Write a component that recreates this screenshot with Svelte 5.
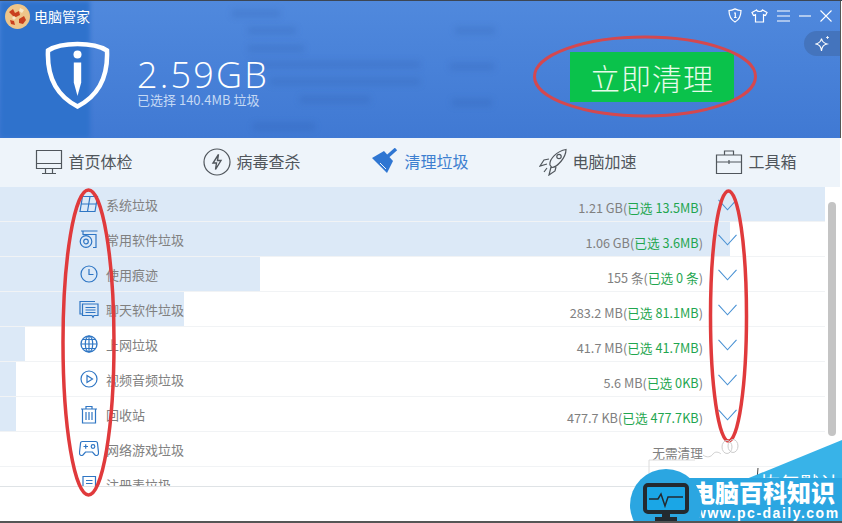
<script>
  const tabs = [
    { name: "首页体检", icon: "monitor" },
    { name: "病毒查杀", icon: "bolt" },
    { name: "清理垃圾", icon: "broom", active: true },
    { name: "电脑加速", icon: "rocket" },
    { name: "工具箱", icon: "box" }
  ];

  // bar = width of the pale blue progress behind each row
  const rows = [
    { name: "系统垃圾", icon: "win", total: "1.21 GB", sel: "已选 13.5MB", bar: 825 },
    { name: "常用软件垃圾", icon: "disc", total: "1.06 GB", sel: "已选 3.6MB", bar: 730 },
    { name: "使用痕迹", icon: "clock", total: "155 条", sel: "已选 0 条", bar: 260 },
    { name: "聊天软件垃圾", icon: "chat", total: "283.2 MB", sel: "已选 81.1MB", bar: 184 },
    { name: "上网垃圾", icon: "globe", total: "41.7 MB", sel: "已选 41.7MB", bar: 25 },
    { name: "视频音频垃圾", icon: "play", total: "5.6 MB", sel: "已选 0KB", bar: 16 },
    { name: "回收站", icon: "trash", total: "477.7 KB", sel: "已选 477.7KB", bar: 16 },
    { name: "网络游戏垃圾", icon: "game", plain: "无需清理", bar: 0 },
    { name: "注册表垃圾", icon: "reg", bar: 0 }
  ];

  // blurred text of the window behind the translucent header
  const smudges = [
    [232, 9, 48], [248, 26, 48], [248, 44, 56], [250, 60, 170], [270, 77, 150],
    [300, 95, 70], [253, 122, 62], [455, 26, 40], [450, 62, 44], [452, 98, 40]
  ];
</script>

<div class="win">
  <header class="top">
    <div class="backdrop" aria-hidden="true"></div>
    {#each smudges as s}
      <div class="smudge" style="left: {s[0]}px; top: {s[1]}px; width: {s[2]}px"></div>
    {/each}
    <div class="title">
      <svg class="avatar" width="25" height="25" viewBox="0 0 25 25">
        <circle cx="12.500" cy="12.500" r="12.500" fill="#eec58a" />
        <path d="M4 8l4-3 2 4 4-2 1 4-4 2-3-1zM14 15l5-3 2 4-3 4-4-1zM5 16l4 1 1 4-4-1z" fill="#c9401f" />
        <path d="M15 4l4 2-2 3-3-2zM9 12l2 2-2 2-2-2z" fill="#f7e9c9" />
      </svg>
      <span>电脑管家</span>
    </div>

    <div class="win-btns">
      <svg width="14" height="15" viewBox="0 0 14 15" fill="none" stroke="#fff" stroke-width="1.200">
        <path d="M1 2.500c2 0 4-.6 6-1.600 2 1 4 1.600 6 1.600 0 5-1.500 9-6 11.500C2.500 11.500 1 7.500 1 2.500z" />
        <path d="M6 5h1.300v4.500M6 9.500h2.600" />
      </svg>
      <svg width="17" height="14" viewBox="0 0 17 14" fill="none" stroke="#fff" stroke-width="1.200">
        <path d="M5.500 1L1 3.500l1.500 3 2-.8V13h8V5.700l2 .8 1.500-3L11.500 1c-.5 2-5.500 2-6 0z" />
      </svg>
      <svg width="13" height="12" viewBox="0 0 13 12" stroke="#fff" stroke-width="1.100">
        <path d="M0 1h13M0 6h13M0 11h13" />
      </svg>
      <svg width="12" height="12" viewBox="0 0 12 12" stroke="#fff" stroke-width="1.100">
        <path d="M0 6h12" />
      </svg>
      <svg width="12" height="12" viewBox="0 0 12 12" stroke="#fff" stroke-width="1.100">
        <path d="M.5.500l11 11M11.500.500l-11 11" />
      </svg>
    </div>

    <div class="spark">
      <svg width="15" height="18" viewBox="0 0 15 18" fill="none" stroke="#fff" stroke-width="1.100">
        <path d="M6.500 3.500c.6 3 1.800 4.500 5.500 5.500-3.700 1-4.900 2.500-5.500 7-.6-4.500-1.800-6-5.500-7 3.700-1 4.900-2.500 5.500-5.500z" />
        <path d="M12.500 1v3M11 2.500h3" stroke-width=".8" />
      </svg>
    </div>

    <div class="summary">
      <svg class="shield" width="65" height="69" viewBox="0 0 65 69">
        <path d="M32.500 3C22 3 10 5 3 9.500c-1 22 6 44 29.500 56C56 53.500 63 31.500 62 9.500 55 5 43 3 32.500 3z" fill="none" stroke="#fff" stroke-width="4.500" />
        <circle cx="32.500" cy="13.500" r="4" fill="#fff" />
        <path d="M28.800 21.500h7.400v20L32.500 55 28.800 41.500z" fill="#fff" />
      </svg>
      <div class="size">
        <div class="gb">2.59GB</div>
        <div class="picked">已选择 140.4MB 垃圾</div>
      </div>
      <button class="clean">立即清理</button>
    </div>
  </header>

  <nav class="tabs">
    {#each tabs as t}
      <div class="tab" class:active={t.active}>
        <svg class="tab-ico" width="28" height="28" viewBox="0 0 28 28" fill="none" stroke="currentColor" stroke-width="1.200">
          {#if t.icon === "monitor"}
            <path d="M1.500 2.500h25v18h-25zM1.500 15.500h25M10.500 20.500v5M17.500 20.500v5M7 25.500h14" />
          {:else if t.icon === "bolt"}
            <circle cx="14" cy="14" r="13" />
            <path d="M15.500 6.500L10 15h3.500l-1 6.500L18 12.500h-3.500z" stroke-width="1.400" />
          {:else if t.icon === "broom"}
            <path d="M1 10L13 3l9 10-6 12z" fill="#2f76d2" stroke="none" />
            <path d="M16 9l9-8" stroke="#2f76d2" stroke-width="3.500" />
            <path d="M9 15l6 6" stroke="#eef4fa" stroke-width="1" />
          {:else if t.icon === "rocket"}
            <path d="M11 17C10 11 18 3 27 1.500 27 10 18 19 13 19.500zM10 11l-5 1-4 6 7-2M17 19l-1 4-6 4 2-8M8 20l-3 4" />
            <circle cx="20" cy="8.500" r="2.200" />
          {:else}
            <path d="M1.500 7h25v18.500h-25zM1.500 14h25M9.500 7V3h9v4M14 12v4" />
          {/if}
        </svg>
        <span>{t.name}</span>
      </div>
    {/each}
  </nav>

  <main class="list">
    {#each rows as r}
      <div class="row">
        <div class="bar" style="width: {r.bar}px"></div>
        <svg class="row-ico" width="20" height="20" viewBox="0 0 20 20" fill="none" stroke="#2f76c4" stroke-width="1.200">
          {#if r.icon === "win"}
            <path d="M3.500 2.500h15L16 17.500H1zM2.300 10h15M11 2.500L8.500 17.500" />
          {:else if r.icon === "disc"}
            <path d="M2 2h16.500M4 2v3.500h13v13h-3" />
            <circle cx="7" cy="12.500" r="5.800" />
            <circle cx="7" cy="12.500" r="2.300" />
          {:else if r.icon === "clock"}
            <circle cx="10" cy="10" r="8" />
            <path d="M10 5v5.500h4.500" />
          {:else if r.icon === "chat"}
            <path d="M1 5V2.500h15M1 5v10h2M3.500 5h15.500v11.500h-4l-1 1.800-1-1.800H3.500zM6.500 8.500h10M6.500 11h10M6.500 13.500h10" />
          {:else if r.icon === "globe"}
            <circle cx="10" cy="10" r="8" stroke-width="1.300" />
            <ellipse cx="10" cy="10" rx="3.700" ry="8" />
            <path d="M2 10h16M3.300 5.500h13.400M3.300 14.500h13.400M10 2v16" />
          {:else if r.icon === "play"}
            <circle cx="10" cy="10" r="8" />
            <path d="M8 6.500l5.500 3.500L8 13.500z" />
          {:else if r.icon === "trash"}
            <path d="M3.500 5h13v14h-13zM2 5h16M7 5V2.500h6V5M7 8v8M10 8v8M13 8v8" />
          {:else if r.icon === "game"}
            <path d="M3.500 2.500h13c1.500 0 2 1 2 2l1 9c.2 3-2 3.500-3.500 2.500l-2.500-3h-7L4 16c-1.500 1-3.700.5-3.500-2.500l1-9c0-1 .5-2 2-2z" />
            <path d="M4.500 7.500h4.500M6.700 5.300v4.500" />
            <circle cx="14" cy="7.500" r="1.800" />
          {:else}
            <path d="M4 2.500h12.500v15H4zM7 6.500h6.500M7 9.500h6.500M7 12.500h6.500" />
          {/if}
        </svg>
        <span class="row-name">{r.name}</span>
        <span class="row-info">
          {#if r.plain}
            {r.plain}
          {:else if r.total}
            {r.total}(<em>{r.sel}</em>)
          {/if}
        </span>
        <span class="chev">
          {#if r.total}
            <svg width="19" height="12" viewBox="0 0 19 12" fill="none" stroke="#4a92d4" stroke-width="1.100">
              <path d="M.5.800l9 10 9-10" />
            </svg>
          {/if}
        </span>
      </div>
    {/each}
  </main>

  <div class="scroll"><div class="thumb"></div></div>
  <div class="foot"></div>

  <svg class="marks" width="842" height="523" viewBox="0 0 842 523" fill="none" stroke="#e03a3c" aria-hidden="true">
    <ellipse cx="645" cy="76.500" rx="110.500" ry="39.500" stroke="#d4484f" stroke-width="3" />
    <ellipse cx="88.500" cy="342.500" rx="25.500" ry="152.500" stroke-width="3.500" />
    <ellipse cx="728.500" cy="316" rx="18" ry="125" stroke-width="3.500" />
    <ellipse cx="727" cy="447" rx="5" ry="6.500" stroke="#ccc" stroke-width="1" />
    <ellipse cx="733" cy="446" rx="5" ry="6.500" stroke="#ccc" stroke-width="1" />
    <path d="M703 455c4 3 8 2 10-1 2-3 6-2 8 0" stroke="#d2d2d2" stroke-width="1" />
    <path d="M649 478v-18h46" stroke="#dcdcdc" stroke-width="1" />
    <path d="M758 468l-1 12" stroke="#444" stroke-width="1" />
  </svg>

  <div class="mark-wrap">
    <div class="wedge"></div>
    <div class="wm-cut"><span>恢复默认</span></div>
    <div class="wm-band"></div>
    <div class="wm-text">
      <b>电脑百科知识</b>
      <i>www.pc-daily.com</i>
    </div>
    <div class="wm-circle">
      <svg width="46" height="40" viewBox="0 0 46 40">
        <rect x="2" y="2" width="42" height="27" rx="3" fill="#1aa6e6" stroke="#232a30" stroke-width="4" />
        <path d="M6 16h9l3-5 4 12 3-9h15" fill="none" stroke="#232a30" stroke-width="1.500" />
        <path d="M19 30h8v4h7v5H12v-5h7z" fill="#232a30" />
      </svg>
    </div>
  </div>
</div>

<style>
  :global(body) {
    margin: 0;
    background: #fff;
  }

  .win {
    position: relative;
    width: 842px;
    height: 523px;
    overflow: hidden;
    background: #fff;
    font-family: "Noto Sans CJK SC", "Liberation Sans", sans-serif;
    box-sizing: border-box;
    border-top: 1px solid #3c4654;
    border-bottom: 2px solid #555;
  }

  .top {
    position: relative;
    height: 137px;
    margin-right: 1px;
    background: linear-gradient(180deg, #5089dd 0%, #4079d3 100%);
    color: #fff;
    overflow: hidden;
    border-right: 1px solid #555;
  }

  .backdrop {
    position: absolute;
    left: 0;
    top: 0;
    bottom: 0;
    width: 90px;
    background: #2f72cc;
    filter: blur(2px);
  }

  .smudge {
    position: absolute;
    height: 7px;
    background: rgba(40, 85, 165, 0.2);
    filter: blur(3px);
  }

  .title {
    position: relative;
    display: flex;
    align-items: center;
    gap: 4px;
    padding: 3px 0 0 5px;
    font-size: 14px;
    line-height: 25px;
  }

  .avatar {
    display: block;
  }

  .win-btns {
    position: absolute;
    top: 7px;
    right: 8px;
    display: flex;
    align-items: center;
    gap: 9px;
  }

  .spark {
    position: absolute;
    top: 30px;
    right: 0;
    width: 36px;
    height: 25px;
    border-radius: 13px 0 0 13px;
    background: #4474bd;
    display: flex;
    align-items: center;
    justify-content: center;
  }

  .summary {
    position: relative;
    display: flex;
    align-items: flex-start;
    padding: 12px 0 0 45px;
  }

  .shield {
    display: block;
    flex: none;
  }

  .size {
    margin-left: 27px;
    padding-top: 17px;
  }

  .gb {
    font-family: "Open Sans", "Liberation Sans", sans-serif;
    font-weight: 300;
    font-size: 36px;
    line-height: 34px;
    letter-spacing: 2.200px;
  }

  .picked {
    font-size: 13px;
    line-height: 16px;
    color: #c5d9f4;
  }

  .clean {
    position: absolute;
    left: 570px;
    top: 23px;
    width: 164px;
    height: 50px;
    border: 0;
    padding: 0;
    background: #0ac24b;
    color: #e6fbe9;
    font-family: inherit;
    font-size: 30px;
    font-weight: 300;
    letter-spacing: 1px;
  }

  .tabs {
    display: flex;
    height: 49px;
    margin-right: 2px;
    background: #eef4fa;
    align-items: center;
    color: #50565c;
    font-size: 16px;
  }

  .tab {
    flex: 1;
    display: flex;
    align-items: center;
    justify-content: center;
    gap: 5px;
    white-space: nowrap;
  }

  .tab span {
    margin-top: -4px;
  }

  .tab.active {
    color: #3d7fd0;
  }

  .tab-ico {
    flex: none;
    margin-top: -1px;
  }

  .list {
    height: 299px;
    overflow: hidden;
    border-bottom: 1px solid #dfe3e6;
  }

  .row {
    position: relative;
    display: flex;
    align-items: center;
    width: 825px;
    height: 35px;
    box-sizing: border-box;
    border-bottom: 1px solid #f1f3f5;
    font-size: 13px;
    color: #808080;
  }

  .bar {
    position: absolute;
    left: 0;
    top: 0;
    bottom: 0;
    background: #dce9f7;
  }

  .row-ico {
    position: relative;
    margin-left: 79px;
    flex: none;
  }

  .row-name {
    position: relative;
    margin-left: 7px;
  }

  .row-info {
    position: relative;
    margin-left: auto;
    white-space: nowrap;
    padding-top: 7px;
    font-size: 12.700px;
  }

  .row-info em {
    font-style: normal;
    color: #1fa64f;
  }

  .chev {
    position: relative;
    width: 19px;
    margin: 2px 88px 0 15px;
    display: flex;
  }

  .scroll {
    position: absolute;
    top: 187px;
    right: 3px;
    width: 14px;
    height: 299px;
  }

  .thumb {
    position: absolute;
    top: 14px;
    left: 3px;
    width: 8px;
    height: 234px;
    border-radius: 4px;
    background: #c4c4c4;
  }

  .foot {
    height: 34px;
  }

  .marks {
    position: absolute;
    left: 0;
    top: -1px;
    pointer-events: none;
  }

  .mark-wrap {
    position: absolute;
    right: 0;
    bottom: -2px;
    width: 212px;
    height: 90px;
  }

  .wedge {
    position: absolute;
    inset: 0;
    background: #38b3e8;
    clip-path: polygon(100% 7px, 100% 100%, 70px 100%, 70px 65px);
  }

  .wm-cut {
    position: absolute;
    left: 130px;
    top: 34px;
    width: 80px;
    height: 11px;
    overflow: hidden;
    color: #fff;
    font-size: 20px;
    line-height: 34px;
    white-space: nowrap;
  }

  .wm-band {
    position: absolute;
    left: 50px;
    right: 0;
    top: 45px;
    bottom: 0;
    background: #2ba6e1;
  }

  .wm-circle {
    position: absolute;
    left: 0;
    bottom: -18px;
    width: 72px;
    height: 72px;
    border-radius: 50%;
    background: #2ba6e1;
    display: flex;
    justify-content: center;
    padding-top: 14px;
    box-sizing: border-box;
  }

  .wm-text {
    position: absolute;
    left: 61px;
    bottom: 2px;
    color: #fff;
    display: flex;
    flex-direction: column;
    align-items: flex-start;
  }

  .wm-text b {
    font-size: 24px;
    line-height: 27px;
    font-weight: 900;
  }

  .wm-text i {
    font-style: normal;
    font-family: "Liberation Sans", sans-serif;
    font-weight: 700;
    font-size: 14px;
    line-height: 16px;
    letter-spacing: 1.500px;
    margin-left: 4px;
  }
</style>
